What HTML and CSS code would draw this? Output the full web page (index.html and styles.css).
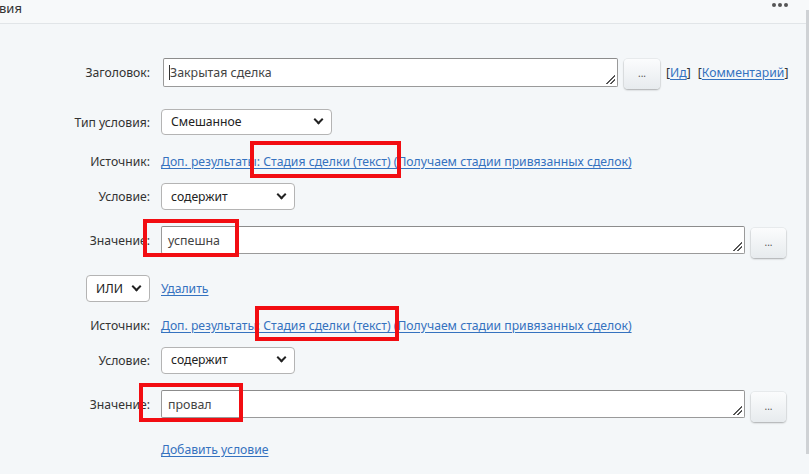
FILE: index.html
```html
<!DOCTYPE html>
<html lang="ru">
<head>
<meta charset="utf-8">
<title>Условия</title>
<link rel="stylesheet" href="styles.css">
</head>
<body>
<div class="page">
  <div class="topbar">
    <span class="title">вия</span>
    <span class="more"><i></i><i></i><i></i></span>
  </div>
  <div class="scrollbar"></div>

  <div class="form">
    <div class="row r1">
      <div class="label">Заголовок:</div>
      <div class="field area a1"><span class="caret"></span>Закрытая сделка<span class="grip"></span></div>
      <div class="btn b1">...</div>
      <div class="extra"><span class="br">[</span><a href="#">Ид</a><span class="br">]</span> <span class="br sp">[</span><a href="#">Комментарий</a><span class="br">]</span></div>
    </div>

    <div class="row r2">
      <div class="label">Тип условия:</div>
      <div class="select s-type">Смешанное<span class="chev"></span></div>
    </div>

    <div class="row r3">
      <div class="label">Источник:</div>
      <a href="#" class="src">Доп. результаты: Стадия сделки (текст) (Получаем стадии привязанных сделок)</a>
    </div>

    <div class="row r4">
      <div class="label">Условие:</div>
      <div class="select s-cond">содержит<span class="chev"></span></div>
    </div>

    <div class="row r5">
      <div class="label">Значение:</div>
      <div class="field area a2">успешна<span class="grip"></span></div>
      <div class="btn b2">...</div>
    </div>

    <div class="row r6">
      <div class="label"><div class="select s-or">ИЛИ<span class="chev"></span></div></div>
      <a href="#" class="del">Удалить</a>
    </div>

    <div class="row r7">
      <div class="label">Источник:</div>
      <a href="#" class="src">Доп. результаты: Стадия сделки (текст) (Получаем стадии привязанных сделок)</a>
    </div>

    <div class="row r8">
      <div class="label">Условие:</div>
      <div class="select s-cond">содержит<span class="chev"></span></div>
    </div>

    <div class="row r9">
      <div class="label">Значение:</div>
      <div class="field area a2">провал<span class="grip"></span></div>
      <div class="btn b2">...</div>
    </div>

    <div class="row r10">
      <div class="label"></div>
      <a href="#" class="add">Добавить условие</a>
    </div>
  </div>

  <div class="mark m1"></div>
  <div class="mark m2"></div>
  <div class="mark m3"></div>
  <div class="mark m4"></div>
</div>
</body>
</html>
```
FILE: styles.css
```css
* { box-sizing: border-box; }
html, body { margin: 0; padding: 0; }
body {
  font-family: "Noto Sans", "Open Sans", sans-serif;
  font-size: 12.2px;
  color: #333;
  background: #f4f7f9;
}
.page {
  position: relative;
  width: 809px;
  height: 474px;
  overflow: hidden;
  background: #f4f7f9;
}
.topbar {
  height: 24px;
  border-bottom: 1px solid #e1e5e8;
  background: #f7f9fa;
  display: flex;
  align-items: flex-start;
  justify-content: space-between;
  padding: 0 21px 0 0;
}
.title { line-height: 16px; color: #333; margin-left: -1px; font-size: 13px; }
.more { display: flex; gap: 2px; margin-top: 3px; }
.more i { width: 4px; height: 4px; border-radius: 50%; background: #555; display: block; }
.scrollbar {
  position: absolute;
  right: 0; top: 10px;
  width: 3px; height: 444px;
  background: #cfd2d5;
}
.form { display: flex; flex-direction: column; }
.row { display: flex; align-items: center; }
.label {
  width: 150px;
  flex: none;
  text-align: right;
  margin-right: 11px;
  display: flex;
  justify-content: flex-end;
  color: #333;
}
a { color: #3572bf; text-decoration: underline; text-underline-offset: 2px; }
.field {
  background: #fff;
  border: 1px solid #9a9a9a;
  border-top-color: #8c8c8c;
  border-radius: 2px;
  position: relative;
  display: flex;
  align-items: center;
  color: #444;
  padding-left: 5px;
  font-size: 12.4px;
}
.a1 { width: 455px; height: 29px; margin-left: 2px; }
.a2 { width: 584px; height: 28px; padding-left: 6px; }
.caret { width: 1px; height: 15px; background: #333; margin-right: 0; }
.grip {
  position: absolute;
  right: 2px; bottom: 2px;
  width: 9px; height: 9px;
  background:
    linear-gradient(135deg, transparent 46%, #555 46%, #555 56%, transparent 56%, transparent 70%, #555 70%, #555 80%, transparent 80%);
}
.btn {
  width: 36px; height: 30px;
  border-radius: 4px;
  background: linear-gradient(#fbfcfd, #e7ebee);
  box-shadow: 0 1px 2px rgba(0,0,0,.28), 0 0 0 1px rgba(0,0,0,.04);
  color: #555;
  font-size: 10px;
  display: flex; align-items: center; justify-content: center;
  padding-bottom: 3px;
  flex: none;
  align-self: flex-start;
}
.b1 { margin-left: 6px; margin-top: 1px; }
.b2 { margin-left: 6px; width: 35px; margin-top: 2px; }
.extra { margin-left: 6px; color: #333; white-space: nowrap; font-size: 12.2px; }
.extra .sp { margin-left: 4px; }
.select {
  background: #fff;
  border: 1px solid #b4b4b4;
  border-radius: 4px;
  display: flex;
  align-items: center;
  justify-content: space-between;
  padding: 0 7px 1px 9px;
  color: #222;
  font-size: 12.2px;
}
.chev {
  width: 7px; height: 7px;
  border-right: 2.5px solid #222;
  border-bottom: 2.5px solid #222;
  transform: rotate(45deg);
  margin-top: -4px;
  margin-right: 2px;
}
.s-type { width: 171px; height: 26px; }
.s-cond { width: 134px; height: 27px; }
.s-or { width: 64px; height: 27px; padding-left: 9px; }
.r1 { margin-top: 34px; height: 29px; }
.r2 { margin-top: 22px; height: 26px; }
.r3 { margin-top: 16px; height: 20px; }
.r4 { margin-top: 12px; height: 27px; }
.r5 { margin-top: 16px; height: 28px; }
.r6 { margin-top: 21px; height: 27px; }
.r7 { margin-top: 13px; height: 20px; }
.r8 { margin-top: 12px; height: 26px; }
.r9 { margin-top: 17px; height: 28px; }
.r10 { margin-top: 21px; height: 20px; }
.mark {
  position: absolute;
  border: 4px solid #f20d12;
}
.m1 { left: 250px; top: 141px; width: 151px; height: 37px; }
.m2 { left: 143px; top: 219px; width: 96px; height: 38px; }
.m3 { left: 255px; top: 306px; width: 144px; height: 35px; }
.m4 { left: 139px; top: 383px; width: 104px; height: 39px; }
```
